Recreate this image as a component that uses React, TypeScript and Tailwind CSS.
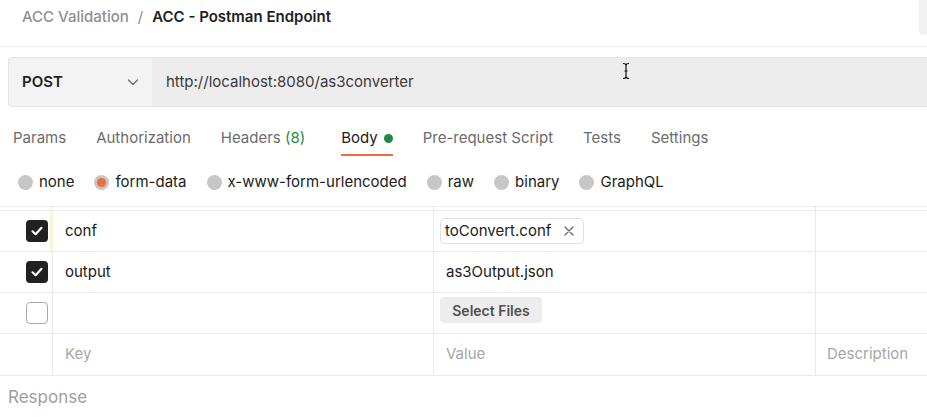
import React from "react";

const Check = () => (
  <div className="w-[22px] h-[22px] rounded-[4px] bg-[#212121] flex items-center justify-center">
    <svg width="14" height="14" viewBox="0 0 14 14" fill="none">
      <path d="M2.5 7.3 L5.6 10.2 L11.5 3.8" stroke="white" strokeWidth="2.2" strokeLinecap="round" strokeLinejoin="round" />
    </svg>
  </div>
);

const Radio = ({ on, label }: { on?: boolean; label: string }) => (
  <div className="flex items-center gap-[6px]">
    <div className="w-[15px] h-[15px] rounded-full bg-[#c6c6c6] flex items-center justify-center">
      {on && <div className="w-[9px] h-[9px] rounded-full bg-[#f26b3a]" />}
    </div>
    <span>{label}</span>
  </div>
);

export default function App() {
  return (
    <div
      className="relative w-[927px] h-[417px] overflow-hidden bg-white text-[#212121]"
      style={{ fontFamily: "Inter, 'Noto Sans', sans-serif" }}
    >
      {/* breadcrumb header */}
      <div className="h-[47px] flex justify-between border-b border-[#ebebeb]">
        <div className="flex items-center gap-[9px] pl-[22px] pb-[11px] text-[15px]">
          <span className="text-[#8f8f8f] font-medium">ACC Validation</span>
          <span className="text-[#8f8f8f]">/</span>
          <span className="font-semibold text-[#212121]">ACC - Postman Endpoint</span>
        </div>
        <div className="w-[8px] h-[35px] bg-[#f2f2f2] rounded-bl-[4px]" />
      </div>

      {/* URL bar */}
      <div className="pt-[10px] pl-[8px]">
        <div className="flex h-[50px]">
          <div className="w-[144px] flex items-center justify-between pl-[13px] pr-[12px] bg-[#f3f3f3] border border-[#e6e6e6] border-r-0 rounded-l-[4px]">
            <span className="font-semibold text-[15px] text-[#212121]">POST</span>
            <svg width="14" height="14" viewBox="0 0 14 14" fill="none">
              <path d="M2.5 5 L7 9.5 L11.5 5" stroke="#6b6b6b" strokeWidth="1.3" strokeLinecap="round" strokeLinejoin="round" />
            </svg>
          </div>
          <div className="flex-1 flex items-center pl-[14px] pt-[1px] bg-[#ededed] border-y border-[#e6e6e6] text-[15px] text-[#3a3a3a]">
            http://localhost:8080/as3converter
          </div>
        </div>
      </div>

      {/* tabs */}
      <div className="flex gap-[30px] pl-[13px] pt-[21px] text-[15px] text-[#6b6b6b]">
        <div className="flex flex-col"><span className="leading-[20px]">Params</span></div>
        <div className="flex flex-col"><span className="leading-[20px]">Authorization</span></div>
        <div className="flex flex-col">
          <span className="leading-[20px]">
            Headers <span className="text-[#1e8a3e]">(8)</span>
          </span>
        </div>
        <div className="flex flex-col ml-[6px]">
          <span className="leading-[20px] text-[#212121] flex items-center gap-[6px]">
            Body <span className="w-[9px] h-[9px] rounded-full bg-[#1e8a3e] inline-block" />
          </span>
          <div className="mt-[6px] h-[2px] bg-[#f26b3a]" />
        </div>
        <div className="flex flex-col"><span className="leading-[20px]">Pre-request Script</span></div>
        <div className="flex flex-col"><span className="leading-[20px]">Tests</span></div>
        <div className="flex flex-col"><span className="leading-[20px]">Settings</span></div>
      </div>

      {/* body type radios */}
      <div className="h-[51px] flex items-center gap-[20px] pl-[18px] pt-[3px] text-[15px] text-[#212121] border-b border-[#ebebeb]">
        <Radio label="none" />
        <Radio on label="form-data" />
        <Radio label="x-www-form-urlencoded" />
        <Radio label="raw" />
        <Radio label="binary" />
        <Radio label="GraphQL" />
      </div>

      {/* table */}
      <div className="text-[15px]">
        <div className="grid grid-cols-[53px_381px_382px_1fr] h-[4px] border-b border-[#ebebeb]">
          <div className="border-r border-[#ebebeb]" />
          <div className="border-r border-[#ebebeb]" />
          <div className="border-r border-[#ebebeb]" />
          <div />
        </div>
        {/* row conf */}
        <div className="grid grid-cols-[53px_381px_382px_1fr] h-[41px] border-b border-[#ebebeb]">
          <div className="flex items-center pl-[26px] border-r-[3px] border-[#fbf3d5]">
            <Check />
          </div>
          <div className="flex items-center pl-[12px] border-r border-[#ebebeb]">conf</div>
          <div className="flex items-center pl-[6px] border-r border-[#ebebeb]">
            <div className="h-[26px] flex items-center gap-[12px] pl-[4px] pr-[8px] border border-[#e0e0e0] rounded-[4px]">
              <span>toConvert.conf</span>
              <svg width="12" height="12" viewBox="0 0 12 12" fill="none">
                <path d="M2 2 L10 10 M10 2 L2 10" stroke="#6b6b6b" strokeWidth="1.3" strokeLinecap="round" />
              </svg>
            </div>
          </div>
          <div />
        </div>
        {/* row output */}
        <div className="grid grid-cols-[53px_381px_382px_1fr] h-[41px] border-b border-[#ebebeb]">
          <div className="flex items-center pl-[26px] border-r border-[#ebebeb]">
            <Check />
          </div>
          <div className="flex items-center pl-[12px] border-r border-[#ebebeb]">output</div>
          <div className="flex items-center pl-[12px] border-r border-[#ebebeb]">as3Output.json</div>
          <div />
        </div>
        {/* row empty */}
        <div className="grid grid-cols-[53px_381px_382px_1fr] h-[41px] border-b border-[#ebebeb]">
          <div className="flex items-center pl-[26px] border-r border-[#ebebeb]">
            <div className="w-[22px] h-[22px] rounded-[4px] border border-[#a9a9a9] bg-white" />
          </div>
          <div className="border-r border-[#ebebeb]" />
          <div className="flex items-start pt-[4px] pl-[6px] border-r border-[#ebebeb]">
            <div className="h-[26px] w-[102px] flex items-center justify-center rounded-[4px] bg-[#ededed] font-semibold text-[14px] text-[#505050]">
              Select Files
            </div>
          </div>
          <div />
        </div>
        {/* row placeholder */}
        <div className="grid grid-cols-[53px_381px_382px_1fr] h-[42px] border-b border-[#ebebeb] text-[#a6a6a6]">
          <div className="border-r border-[#ebebeb]" />
          <div className="flex items-center pl-[12px] border-r border-[#ebebeb]">Key</div>
          <div className="flex items-center pl-[12px] border-r border-[#ebebeb]">Value</div>
          <div className="flex items-center pl-[11px]">Description</div>
        </div>
      </div>

      {/* response */}
      <div className="pl-[8px] pt-[9px] text-[17px] text-[#9e9e9e]">Response</div>

      {/* mouse cursor (I-beam) */}
      <svg className="absolute left-[621px] top-[62px]" width="10" height="18" viewBox="0 0 10 18" fill="none">
        <path d="M2 1.5 Q5 1.5 5 3.5 Q5 1.5 8 1.5 M5 3.5 V14.5 M2 16.5 Q5 16.5 5 14.5 Q5 16.5 8 16.5 M3.5 9 H6.5" stroke="#111" strokeWidth="1.2" />
      </svg>
    </div>
  );
}
